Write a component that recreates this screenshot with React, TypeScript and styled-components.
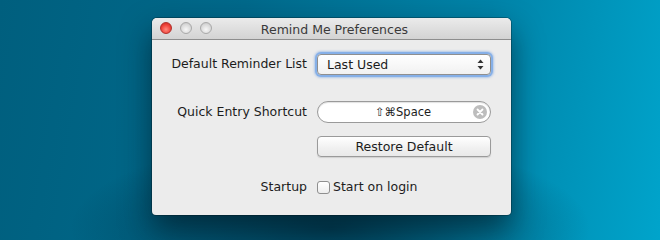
import React, { useState } from 'react'
import styled, { createGlobalStyle } from 'styled-components'

const Global = createGlobalStyle`
  html, body { margin: 0; padding: 0; }
  body { font-family: "DejaVu Sans", "Liberation Sans", sans-serif; }
`

const App = () => {
  const [login, setLogin] = useState(false)
  return (
    <>
      <Global />
      <Desktop>
        <Window>
          <TitleBar>
            <Lights>
              <Light $color="red" />
              <Light />
              <Light />
            </Lights>
            <Title>Remind Me Preferences</Title>
          </TitleBar>
          <Body>
            <Label $top={16}>Default Reminder List</Label>
            <Popup $top={14}>
              <span>Last Used</span>
              <Arrows>
                <svg width="7" height="11" viewBox="0 0 7 11">
                  <path d="M3.5 0.5 L6.5 4 L0.5 4 Z" fill="#333" />
                  <path d="M3.5 10.5 L6.5 7 L0.5 7 Z" fill="#333" />
                </svg>
              </Arrows>
            </Popup>

            <Label $top={29}>Quick Entry Shortcut</Label>
            <Shortcut $top={26}>
              <ShortcutText>⇧⌘Space</ShortcutText>
              <Clear>
                <svg width="14" height="14" viewBox="0 0 14 14">
                  <circle cx="7" cy="7" r="7" fill="#bdbdbd" />
                  <path d="M4.5 4.5 L9.5 9.5 M9.5 4.5 L4.5 9.5" stroke="#fff" strokeWidth="1.8" strokeLinecap="round" />
                </svg>
              </Clear>
            </Shortcut>

            <span />
            <Button $top={13}>Restore Default</Button>

            <Label $top={22}>Startup</Label>
            <CheckRow $top={22} onClick={() => setLogin(!login)}>
              <Check>{login ? '✓' : ''}</Check>
              <span>Start on login</span>
            </CheckRow>
          </Body>
        </Window>
      </Desktop>
    </>
  )
}

export default App

const Desktop = styled.div`
  width: 660px;
  height: 240px;
  box-sizing: border-box;
  padding: 18px 0 0 152px;
  overflow: hidden;
  background:
    radial-gradient(ellipse 260px 90px at 330px 228px, rgba(0, 25, 40, 0.6), rgba(0, 25, 40, 0) 100%),
    linear-gradient(100deg, #005f7e 0%, #00698b 35%, #0083a8 70%, #00a4cb 100%);
`

const Window = styled.div`
  width: 359px;
  height: 197px;
  background: #ececec;
  border-radius: 5px 5px 4px 4px;
  overflow: hidden;
  box-shadow: 0 14px 30px rgba(0, 20, 30, 0.6), 0 0 0 1px rgba(0, 0, 0, 0.25);
  display: flex;
  flex-direction: column;
`

const TitleBar = styled.div`
  height: 21px;
  flex: none;
  position: relative;
  display: flex;
  align-items: center;
  justify-content: center;
  background: linear-gradient(#ebebeb, #d3d3d3);
  border-bottom: 1px solid #8e8e8e;
`

const Lights = styled.div`
  position: absolute;
  left: 8px;
  top: 4px;
  display: flex;
  gap: 8px;
`

const Light = styled.div<{ $color?: string }>`
  width: 12px;
  height: 12px;
  border-radius: 50%;
  box-sizing: border-box;
  border: 1px solid ${p => (p.$color === 'red' ? '#b0302b' : '#a9a9a9')};
  background: ${p =>
    p.$color === 'red'
      ? 'radial-gradient(circle at 50% 65%, #ff8a7e 0%, #f0443a 55%, #c5241d 100%)'
      : 'radial-gradient(circle at 50% 65%, #f7f7f7 0%, #d9d9d9 60%, #bcbcbc 100%)'};
`

const Title = styled.div`
  font-size: 12.5px;
  color: #3a3a3a;
  margin-left: 6px;
  margin-top: 1px;
`

const Body = styled.div`
  display: grid;
  grid-template-columns: 1fr 174px;
  column-gap: 9px;
  padding-right: 20px;
  align-items: start;
  font-size: 12.5px;
  color: #1c1c1c;
`

const Label = styled.div<{ $top: number }>`
  text-align: right;
  margin-top: ${p => p.$top}px;
  line-height: 16px;
  margin-right: 1px;
`

const Popup = styled.div<{ $top: number }>`
  margin-top: ${p => p.$top}px;
  height: 21px;
  box-sizing: border-box;
  display: flex;
  align-items: center;
  justify-content: space-between;
  padding: 0 6px 0 9px;
  border: 1px solid #8f8f8f;
  border-radius: 4px;
  background: linear-gradient(#ffffff, #f1f1f1);
  box-shadow: 0 0 0 2px #86b0e8, 0 0 2px 3px rgba(120, 165, 230, 0.5);
`

const Arrows = styled.div`
  display: flex;
  align-items: center;
`

const Shortcut = styled.div<{ $top: number }>`
  margin-top: ${p => p.$top}px;
  height: 22px;
  box-sizing: border-box;
  position: relative;
  display: flex;
  align-items: center;
  justify-content: center;
  border: 1px solid #9a9a9a;
  border-radius: 11px;
  background: #fff;
  box-shadow: inset 0 1px 1px rgba(0, 0, 0, 0.12);
`

const ShortcutText = styled.span`
  font-size: 11.5px;
  margin-left: -2px;
`

const Clear = styled.div`
  position: absolute;
  right: 3px;
  top: 3px;
  line-height: 0;
`

const Button = styled.button<{ $top: number }>`
  margin-top: ${p => p.$top}px;
  height: 21px;
  width: 100%;
  padding: 0;
  border: 1px solid #9a9a9a;
  border-radius: 4px;
  background: linear-gradient(#ffffff, #f0f0f0 60%, #e9e9e9);
  box-shadow: 0 1px 1px rgba(0, 0, 0, 0.12);
  font-family: inherit;
  font-size: 12.5px;
  color: #1c1c1c;
`

const CheckRow = styled.label<{ $top: number }>`
  margin-top: ${p => p.$top}px;
  display: flex;
  align-items: center;
  gap: 3px;
  line-height: 16px;
`

const Check = styled.span`
  width: 13px;
  height: 13px;
  box-sizing: border-box;
  border: 1px solid #8f8f8f;
  border-radius: 3px;
  background: linear-gradient(#ffffff, #eeeeee);
  font-size: 10px;
  line-height: 11px;
  text-align: center;
`
